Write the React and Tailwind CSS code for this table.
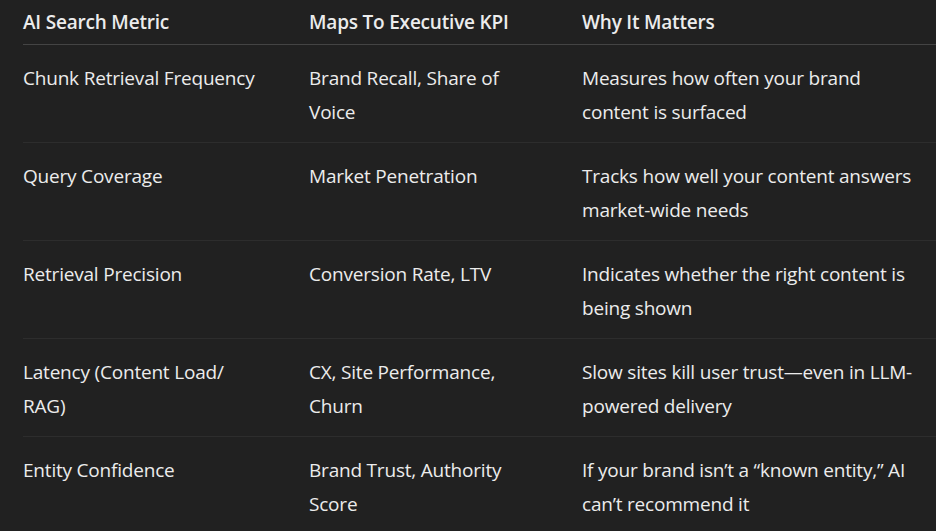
const rows = [
  {
    metric: ["Chunk Retrieval Frequency"],
    kpi: ["Brand Recall, Share of", "Voice"],
    why: ["Measures how often your brand", "content is surfaced"],
  },
  {
    metric: ["Query Coverage"],
    kpi: ["Market Penetration"],
    why: ["Tracks how well your content answers", "market-wide needs"],
  },
  {
    metric: ["Retrieval Precision"],
    kpi: ["Conversion Rate, LTV"],
    why: ["Indicates whether the right content is", "being shown"],
  },
  {
    metric: ["Latency (Content Load/", "RAG)"],
    kpi: ["CX, Site Performance,", "Churn"],
    why: ["Slow sites kill user trust\u2014even in LLM-", "powered delivery"],
  },
  {
    metric: ["Entity Confidence"],
    kpi: ["Brand Trust, Authority", "Score"],
    why: ["If your brand isn\u2019t a \u201cknown entity,\u201d AI", "can\u2019t recommend it"],
  },
];

function Cell({ lines }) {
  return (
    <div className="pr-4">
      {lines.map((l, i) => (
        <div key={i} className="whitespace-nowrap">
          {l}
        </div>
      ))}
    </div>
  );
}

export default function App() {
  return (
    <div
      className="w-[936px] h-[531px] overflow-hidden bg-[#212121] text-[#ececec] text-[19px] leading-[34px] tracking-[-0.2px]"
      style={{ fontFamily: '"Open Sans", "Noto Sans", sans-serif' }}
    >
      <div className="ml-[23px]">
        {/* header */}
        <div className="grid grid-cols-[286px_273px_1fr] pt-[5px] pb-[5px] border-b border-[#444444] font-semibold">
          <div>AI Search Metric</div>
          <div>Maps To Executive KPI</div>
          <div>Why It Matters</div>
        </div>

        {/* rows */}
        {rows.map((r, i) => (
          <div
            key={i}
            className="grid grid-cols-[286px_273px_1fr] pt-[16px] pb-[13px] border-b border-[#2d2d2d]"
          >
            <Cell lines={r.metric} />
            <Cell lines={r.kpi} />
            <Cell lines={r.why} />
          </div>
        ))}
      </div>
    </div>
  );
}
